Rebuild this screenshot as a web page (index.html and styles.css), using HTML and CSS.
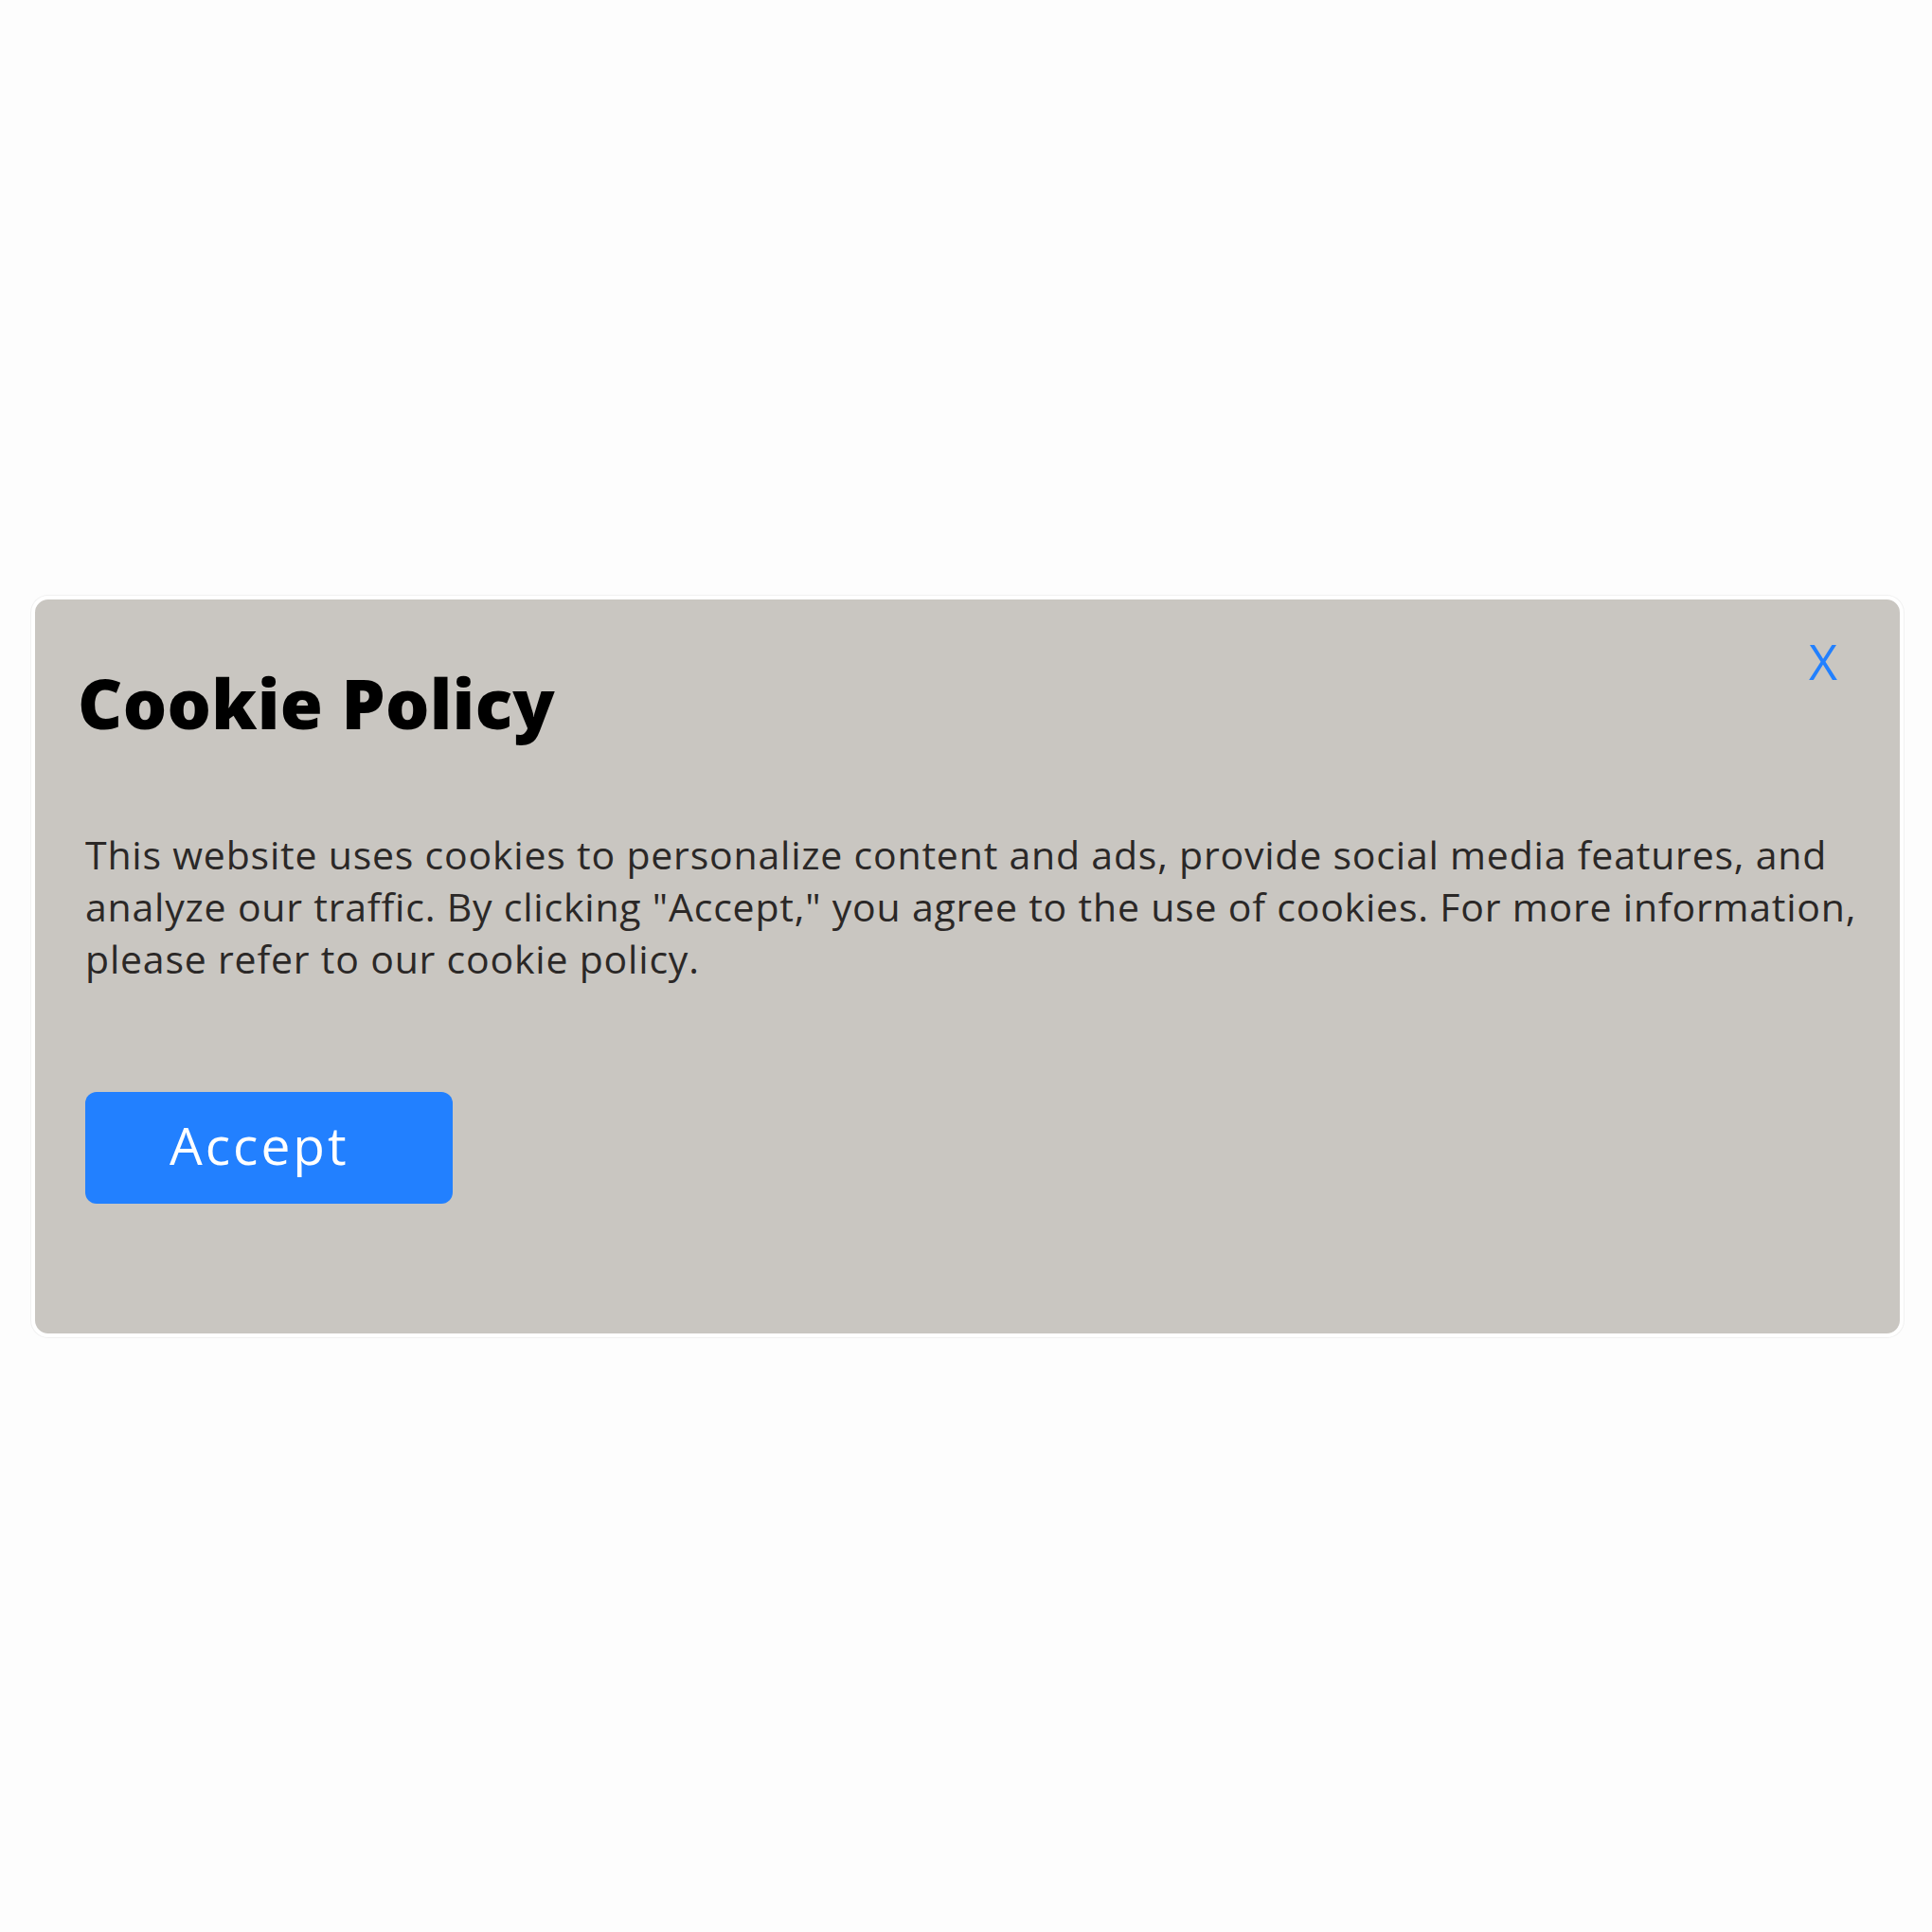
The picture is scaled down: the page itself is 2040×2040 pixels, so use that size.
FILE: index.html
```html
<!DOCTYPE html>
<html lang="en">
<head>
<meta charset="utf-8">
<title>Cookie Policy</title>
<link rel="stylesheet" href="styles.css">
</head>
<body>
<main class="page">
  <section class="card" role="dialog" aria-labelledby="cookie-title">
    <header class="card-header">
      <h1 class="title" id="cookie-title">Cookie Policy</h1>
      <button class="close" type="button" aria-label="Close">X</button>
    </header>
    <p class="text">This website uses cookies to personalize content and ads, provide social media features, and analyze our traffic. By clicking "Accept," you agree to the use of cookies. For more information, please refer to our cookie policy.</p>
    <button class="accept" type="button">Accept</button>
  </section>
</main>
</body>
</html>
```

FILE: styles.css
```css
html, body {
  margin: 0;
  padding: 0;
  background: #fdfdfd;
}

body {
  font-family: "Open Sans", "Liberation Sans", sans-serif;
}

.page {
  padding-top: 629px;
  padding-left: 33px;
  min-height: 2040px;
  box-sizing: border-box;
}

.card {
  box-sizing: border-box;
  width: 1977px;
  background: #c9c6c1;
  border: 4px solid #ffffff;
  box-shadow: 0 0 0 1px #f1f1f1;
  border-radius: 18px;
  padding: 30px 30px 137px 53px;
}

.card-header {
  display: flex;
  justify-content: space-between;
  align-items: flex-start;
}

.title {
  margin: 29px 0 0 -8px;
  font-size: 73px;
  line-height: 100px;
  font-weight: 800;
  color: #000000;
  letter-spacing: 0.3px;
}

.close {
  margin: 0 36px 0 0;
  padding: 0;
  border: none;
  background: none;
  font-family: "Open Sans", "Liberation Sans", sans-serif;
  font-size: 52px;
  line-height: 70px;
  font-weight: 400;
  color: #2280ff;
  cursor: pointer;
}

.text {
  margin: 83px 0 0 0;
  font-size: 41px;
  line-height: 55px;
  letter-spacing: 0.8px;
  color: #2b2827;
}

.accept {
  display: block;
  box-sizing: border-box;
  margin-top: 113px;
  width: 388px;
  height: 118px;
  padding: 0 0 6px 89px;
  border: none;
  border-radius: 12px;
  background: #2280ff;
  color: #ffffff;
  font-family: "Open Sans", "Liberation Sans", sans-serif;
  font-size: 55px;
  line-height: 112px;
  letter-spacing: 3px;
  text-align: left;
  cursor: pointer;
}
```
